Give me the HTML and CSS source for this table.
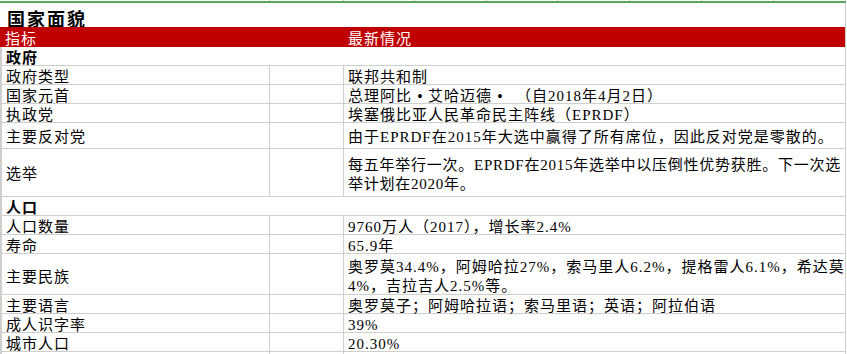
FILE: index.html
```html
<!DOCTYPE html>
<html lang="zh-CN">
<head>
<meta charset="utf-8">
<title>国家面貌</title>
<link rel="stylesheet" href="styles.css">
</head>
<body>
<div class="sheet">
  <div class="ruler">
    <span class="t1"></span><span class="t2"></span><span class="t3"></span><span class="t4"></span><span class="t3"></span><span class="t4"></span><span class="t4"></span><span class="t4"></span><span class="t4"></span>
  </div>
  <div class="green"></div>
  <div class="title">国家面貌</div>
  <div class="head">
    <div class="ca">指标</div>
    <div class="cb"></div>
    <div class="cc">最新情况</div>
  </div>

  <div class="section">政府</div>
  <div class="row">
    <div class="ca">政府类型</div><div class="cb"></div><div class="cc">联邦共和制</div>
  </div>
  <div class="row">
    <div class="ca">国家元首</div><div class="cb"></div><div class="cc">总理阿比<span class="dot">•</span>艾哈迈德<span class="dot">•</span><span class="gap"></span>（自2018年4月2日）</div>
  </div>
  <div class="row">
    <div class="ca">执政党</div><div class="cb"></div><div class="cc">埃塞俄比亚人民革命民主阵线（EPRDF）</div>
  </div>
  <div class="row h26">
    <div class="ca">主要反对党</div><div class="cb"></div><div class="cc">由于EPRDF在2015年大选中赢得了所有席位，因此反对党是零散的。</div>
  </div>
  <div class="row h48">
    <div class="ca">选举</div><div class="cb"></div><div class="cc multi tight">每五年举行一次。EPRDF在2015年选举中以压倒性优势获胜。下一次选<br>举计划在2020年。</div>
  </div>

  <div class="section">人口</div>
  <div class="row">
    <div class="ca">人口数量</div><div class="cb"></div><div class="cc">9760万人（2017），增长率2.4%</div>
  </div>
  <div class="row">
    <div class="ca">寿命</div><div class="cb"></div><div class="cc">65.9年</div>
  </div>
  <div class="row h41">
    <div class="ca">主要民族</div><div class="cb"></div><div class="cc multi">奥罗莫34.4%，阿姆哈拉27%，索马里人6.2%，提格雷人6.1%，希达莫<br>4%，吉拉吉人2.5%等。</div>
  </div>
  <div class="row">
    <div class="ca">主要语言</div><div class="cb"></div><div class="cc">奥罗莫子；阿姆哈拉语；索马里语；英语；阿拉伯语</div>
  </div>
  <div class="row">
    <div class="ca">成人识字率</div><div class="cb"></div><div class="cc">39%</div>
  </div>
  <div class="row">
    <div class="ca">城市人口</div><div class="cb"></div><div class="cc">20.30%</div>
  </div>
  <div class="row tail">
    <div class="ca"></div><div class="cb"></div><div class="cc"></div>
  </div>
</div>
</body>
</html>
```

FILE: styles.css
```css
* { box-sizing: border-box; }

html, body {
  margin: 0;
  padding: 0;
  background: #ffffff;
}

body {
  width: 847px;
  height: 354px;
  overflow: hidden;
  font-family: "Liberation Serif", "Noto Sans CJK SC", serif;
  font-size: 15px;
  letter-spacing: 1px;
  color: #000000;
}

.sheet {
  width: 846px;
  display: flex;
  flex-direction: column;
}

/* top column-boundary strip */
.ruler {
  display: flex;
  height: 1px;
}
.ruler span {
  height: 1px;
  border-right: 1px solid #c8c8c8;
}
.ruler .t1 { width: 270px; }
.ruler .t2 { width: 74px; }
.ruler .t3 { width: 71px; }
.ruler .t4 { width: 72px; }

.green {
  height: 2px;
  background: #5aa65a;
}

.title {
  height: 24px;
  padding: 5px 0 0 7px;
  display: flex;
  align-items: center;
  font-family: "Noto Sans CJK SC", sans-serif;
  font-weight: 700;
  font-size: 18px;
  letter-spacing: 2px;
  border-right: 1px solid #cfcfcf;
}

.head {
  height: 20px;
  display: grid;
  grid-template-columns: 270px 74px 502px;
  background: #c00000;
  color: #ffffff;
  border-right: 1px solid #cfcfcf;
}
.head > div {
  display: flex;
  align-items: center;
  padding-top: 3px;
  line-height: 18px;
}
.head .ca { padding-left: 5px; }
.head .cc { padding-left: 4px; }

.section {
  height: 19px;
  padding: 3px 0 0 4px;
  display: flex;
  align-items: center;
  font-weight: 700;
  line-height: 16px;
  border-left: 2px solid #cfcfcf;
  border-right: 1px solid #cfcfcf;
  border-bottom: 1px solid #cfcfcf;
}

.row {
  height: 19px;
  display: grid;
  grid-template-columns: 268px 74px 502px;
  border-left: 2px solid #cfcfcf;
  border-bottom: 1px solid #cfcfcf;
}
.row > div {
  display: flex;
  align-items: center;
  padding-top: 3px;
  line-height: 16px;
  white-space: nowrap;
  border-right: 1px solid #cfcfcf;
}
.row .ca { padding-left: 4px; }
.row .cc { padding-left: 4px; }

.row.h26 { height: 26px; }
.row.h48 { height: 48px; }
.row.h41 { height: 41px; }

.row .multi {
  line-height: 19px;
  padding-top: 4px;
}

.row .tight {
  letter-spacing: 0.75px;
}

.row.tail {
  height: 3px;
  border-bottom: none;
}
.row.tail > div { padding: 0; }

.dot {
  display: inline-block;
  width: 16px;
  text-align: center;
  font-family: "Liberation Sans", sans-serif;
  font-size: 14px;
  letter-spacing: 0;
}

.gap {
  display: inline-block;
  width: 8px;
}
```
